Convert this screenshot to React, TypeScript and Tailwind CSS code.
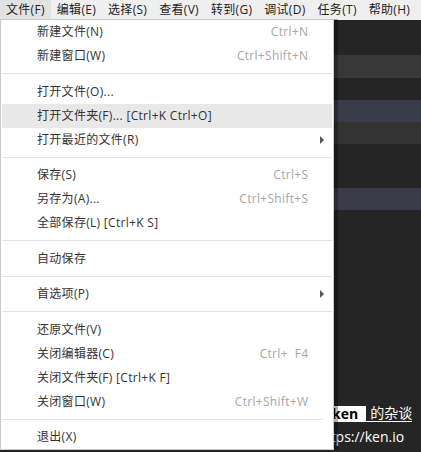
const font = { fontFamily: '"Open Sans", "Noto Sans CJK SC", sans-serif' };

type Item = {
  label: string;
  shortcut?: string;
  sub?: boolean;
  active?: boolean;
};

type Entry = Item | "sep" | "sep-short";

const menuBar = ["文件(F)", "编辑(E)", "选择(S)", "查看(V)", "转到(G)", "调试(D)", "任务(T)", "帮助(H)"];

const entries: Entry[] = [
  { label: "新建文件(N)", shortcut: "Ctrl+N" },
  { label: "新建窗口(W)", shortcut: "Ctrl+Shift+N" },
  "sep",
  { label: "打开文件(O)..." },
  { label: "打开文件夹(F)... [Ctrl+K Ctrl+O]", active: true },
  { label: "打开最近的文件(R)", sub: true },
  "sep",
  { label: "保存(S)", shortcut: "Ctrl+S" },
  { label: "另存为(A)...", shortcut: "Ctrl+Shift+S" },
  { label: "全部保存(L) [Ctrl+K S]" },
  "sep",
  { label: "自动保存" },
  "sep",
  { label: "首选项(P)", sub: true },
  "sep",
  { label: "还原文件(V)" },
  { label: "关闭编辑器(C)", shortcut: "Ctrl+  F4" },
  { label: "关闭文件夹(F) [Ctrl+K F]" },
  { label: "关闭窗口(W)", shortcut: "Ctrl+Shift+W" },
  "sep-short",
  { label: "退出(X)" },
];

function MenuRow({ item }: { item: Item }) {
  return (
    <div
      className={`flex items-center h-[24px] pl-[35px] pr-[8px] text-[12px] leading-none tracking-[0.3px] text-[#333333] ${
        item.active ? "bg-[#e8e8e8]" : ""
      }`}
    >
      <span className="flex-1 whitespace-pre">{item.label}</span>
      {item.shortcut && <span className="whitespace-pre text-[#a6a6a6] -mr-[0.3px]">{item.shortcut}</span>}
      <span className="w-[16px] flex justify-end">
        {item.sub && (
          <span className="w-0 h-0 border-y-[4px] border-y-transparent border-l-[4px] border-l-[#555555]" />
        )}
      </span>
    </div>
  );
}

export default function App() {
  return (
    <div className="relative w-[421px] h-[452px] overflow-hidden bg-[#252526] flex flex-col" style={font}>
      {/* menu bar */}
      <div className="flex h-[20px] bg-[#efefef] text-[12px] leading-none tracking-[0.3px] text-[#222222] shrink-0">
        {menuBar.map((m, i) => (
          <div key={m} className={`flex items-center px-[6px] ${i === 0 ? "bg-[#e2e2e2]" : ""}`}>
            {m}
          </div>
        ))}
      </div>

      {/* editor behind the menu */}
      <div className="flex-1 flex flex-col">
        <div className="h-[35px]" />
        <div className="h-[23px] bg-[#383838]" />
        <div className="h-[22px]" />
        <div className="h-[22px] bg-[#3b3b47]" />
        <div className="h-[22px] bg-[#333333]" />
        <div className="h-[44px]" />
        <div className="h-[22px] bg-[#3b3b47]" />
        <div className="flex-1" />
        <div className="pb-[8px] text-white text-[14px] leading-none">
          <div className="pl-[320px]">
            <div className="inline-flex items-center border-b-[1.5px] border-white">
              <span className="bg-white text-black font-bold pl-[12px] pr-[8px] h-[15px] flex items-center">ken</span>
              <span className="ml-[4px] pb-[1px]">的杂谈</span>
            </div>
          </div>
          <div className="mt-[8px] pl-[317px]">https://ken.io</div>
        </div>
      </div>

      {/* file dropdown */}
      <div className="absolute left-0 top-[19px] w-[334px] bg-white border border-[#cccccc] px-px shadow-[4px_0_0_rgba(0,0,0,0.3)]">
        {entries.map((e, i) =>
          e === "sep" || e === "sep-short" ? (
            <div key={i} className={`h-[11.5px] flex items-center ${e === "sep-short" ? "mr-[9px]" : ""}`}>
              <div className="h-px w-full bg-[#e4e4e4]" />
            </div>
          ) : (
            <MenuRow key={i} item={e} />
          )
        )}
      </div>
    </div>
  );
}
